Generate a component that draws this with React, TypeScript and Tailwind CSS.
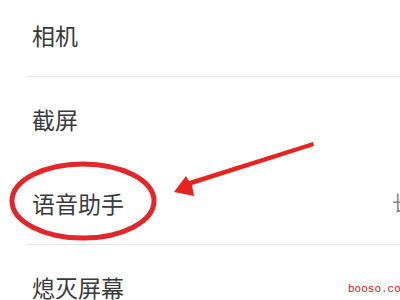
import React from 'react';

const rows = [
  { label: '相机', divider: true },
  { label: '截屏', divider: false },
  { label: '语音助手', divider: true, value: '长' },
  { label: '熄灭屏幕', divider: false },
];

export default function App() {
  return (
    <div
      className="relative w-[400px] h-[300px] overflow-hidden bg-white"
      style={{ fontFamily: '"Noto Sans CJK SC", "Noto Sans", sans-serif' }}
    >
      <div className="-mt-[7px] flex flex-col">
        {rows.map((row) => (
          <div key={row.label} className="relative h-[84px] flex items-center">
            <span className="pl-8 text-[23px] leading-none text-[#3a3a3a]">{row.label}</span>
            {row.value && (
              <span className="absolute left-[392px] text-[20px] leading-none text-[#8a8a8a]">
                {row.value}
              </span>
            )}
            {row.divider && (
              <div className="absolute bottom-0 left-[26px] right-0 h-px bg-[#e6e6e6]" />
            )}
          </div>
        ))}
      </div>

      {/* annotation: red ellipse + arrow */}
      <svg className="absolute inset-0" width="400" height="300" viewBox="0 0 400 300">
        <ellipse cx="83" cy="201" rx="71" ry="37" fill="none" stroke="#e3262a" strokeWidth="5" />
        <polygon points="313,142 314,146 192,185 194,196 174,192 186,176 189,181" fill="#e8231f" />
      </svg>

      <span
        className="absolute left-[348px] top-[284px] text-[11px] leading-none text-[#d4141a]"
        style={{ fontFamily: '"Liberation Mono", monospace' }}
      >
        booso.com
      </span>
    </div>
  );
}
